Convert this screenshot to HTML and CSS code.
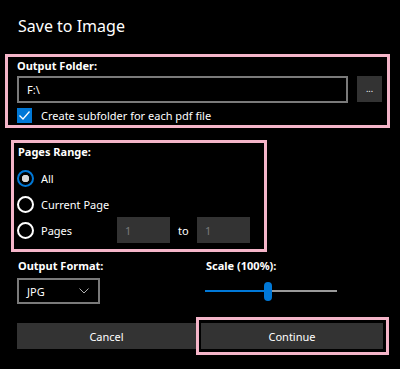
FILE: index.html
```html
<!DOCTYPE html>
<html lang="en">
<head>
    <meta charset="UTF-8">
    <title>Save to Image</title>
    <link rel="stylesheet" href="styles.css">
</head>
<body>
    <div class="dialog">
        <h1 class="title">Save to Image</h1>

        <section class="box folder-box">
            <div class="label">Output Folder:</div>
            <div class="folder-row">
                <input type="text" class="text-input" value="F:\">
                <button class="browse">...</button>
            </div>
            <label class="check-row">
                <input type="checkbox" checked>
                <span>Create subfolder for each pdf file</span>
            </label>
        </section>

        <section class="box range-box">
            <div class="label range-label">Pages Range:</div>
            <label class="radio-row">
                <input type="radio" name="range" checked>
                <span>All</span>
            </label>
            <label class="radio-row">
                <input type="radio" name="range">
                <span>Current Page</span>
            </label>
            <div class="radio-row">
                <label class="radio-label">
                    <input type="radio" name="range">
                    <span>Pages</span>
                </label>
                <input type="text" class="page-input" value="1" disabled>
                <span class="to">to</span>
                <input type="text" class="page-input" value="1" disabled>
            </div>
        </section>

        <div class="options">
            <div class="format-col">
                <div class="label">Output Format:</div>
                <div class="select">
                    <span>JPG</span>
                    <svg width="10" height="6" viewBox="0 0 10 6"><path d="M0.5 0.5 L5 5 L9.5 0.5" fill="none" stroke="#b0b0b0" stroke-width="1"/></svg>
                </div>
            </div>
            <div class="scale-col">
                <div class="label">Scale (100%):</div>
                <div class="slider-wrap">
                    <input type="range" class="slider" min="10" max="200" value="100" style="--fill: 47%">
                </div>
            </div>
        </div>

        <div class="buttons">
            <button class="btn cancel">Cancel</button>
            <div class="continue-box">
                <button class="btn">Continue</button>
            </div>
        </div>
    </div>
</body>
</html>
```

FILE: styles.css
```css
/* General */
body {
    margin: 0;
    background-color: #000000;
    color: #ffffff;
    font-family: 'Noto Sans', 'Open Sans', sans-serif;
    font-size: 11px;
}

.dialog {
    width: 400px;
    height: 369px;
    display: flex;
    flex-direction: column;
}

.title {
    font-size: 16px;
    font-weight: normal;
    line-height: 24px;
    margin: 14px 0 0 18px;
}

.label {
    font-weight: bold;
    line-height: 14px;
}

/* Pink outline boxes */
.box {
    border: 3px solid #f5b5c9;
    box-sizing: border-box;
}

.folder-box {
    margin: 16px 0 0 5px;
    width: 385px;
    height: 74px;
    padding: 2px 5px 0 9px;
}

.folder-row {
    display: flex;
    gap: 9px;
    margin-top: 3px;
}

.text-input {
    width: 331px;
    height: 27px;
    box-sizing: border-box;
    background-color: #000000;
    border: 2px solid #7a7a7a;
    color: #ffffff;
    font-family: inherit;
    font-size: 11px;
    padding: 0 8px;
    outline: none;
}

.browse {
    width: 25px;
    height: 26px;
    background-color: #333333;
    color: #ffffff;
    border: none;
    font-family: inherit;
    font-size: 9px;
    line-height: 26px;
    padding: 0 0 2px 0;
}

.check-row {
    display: flex;
    align-items: center;
    gap: 9px;
    margin-top: 5px;
    height: 15px;
}

.check-row input {
    appearance: none;
    width: 15px;
    height: 15px;
    margin: 0;
    background-color: #0078d7;
    background-image: url("data:image/svg+xml,%3Csvg xmlns='http://www.w3.org/2000/svg' viewBox='0 0 15 15'%3E%3Cpath d='M2.5 7.5 L6 11 L12.5 3.5' fill='none' stroke='white' stroke-width='1.3'/%3E%3C/svg%3E");
}

/* Pages range */
.range-box {
    margin: 12px 0 0 11px;
    width: 256px;
    height: 112px;
    padding: 2px 14px 0 3px;
}

.range-label {
    margin-left: 1px;
    margin-bottom: 6px;
}

.radio-row {
    display: flex;
    align-items: center;
    height: 26px;
}

.radio-label {
    display: flex;
    align-items: center;
    width: 100px;
}

.radio-row input[type="radio"] {
    appearance: none;
    width: 17px;
    height: 17px;
    margin: 0 7px 0 0;
    border: 2px solid #ffffff;
    border-radius: 50%;
    box-sizing: border-box;
}

.radio-row input[type="radio"]:checked {
    border-color: #0078d7;
    background: radial-gradient(circle, #d8d8d8 0 3.5px, #000000 4px);
}

.page-input {
    width: 53px;
    height: 26px;
    box-sizing: border-box;
    background-color: #333333;
    border: none;
    color: #7a7a7a;
    font-family: inherit;
    font-size: 11px;
    padding: 0 8px;
}

.to {
    width: 27px;
    padding-left: 8px;
    box-sizing: border-box;
}

/* Format and scale */
.options {
    display: flex;
    margin: 7px 0 0 17px;
}

.format-col {
    width: 188px;
}

.options .label {
    margin-bottom: 5px;
    margin-left: 1px;
}

.select {
    width: 83px;
    height: 26px;
    box-sizing: border-box;
    border: 2px solid #7a7a7a;
    display: flex;
    align-items: center;
    justify-content: space-between;
    padding: 0 9px 0 8px;
}

.slider-wrap {
    height: 26px;
    display: flex;
    align-items: center;
}

.slider {
    -webkit-appearance: none;
    appearance: none;
    width: 132px;
    height: 20px;
    margin: 0;
    background: transparent;
}

.slider::-webkit-slider-runnable-track {
    height: 2px;
    background: linear-gradient(to right, #0078d7 var(--fill), #9a9a9a var(--fill));
}

.slider::-webkit-slider-thumb {
    -webkit-appearance: none;
    width: 8px;
    height: 19px;
    border-radius: 4px;
    background-color: #0078d7;
    margin-top: -8.5px;
}

/* Buttons */
.buttons {
    display: flex;
    align-items: center;
    margin: 13px 0 0 17px;
}

.btn {
    height: 26px;
    background-color: #333333;
    color: #ffffff;
    border: none;
    font-family: inherit;
    font-size: 11px;
    padding: 0;
}

.cancel {
    width: 179px;
}

.continue-box {
    border: 3px solid #f5b5c9;
    padding: 3px 3px 3px 2px;
    display: flex;
}

.continue-box .btn {
    width: 182px;
}
```
